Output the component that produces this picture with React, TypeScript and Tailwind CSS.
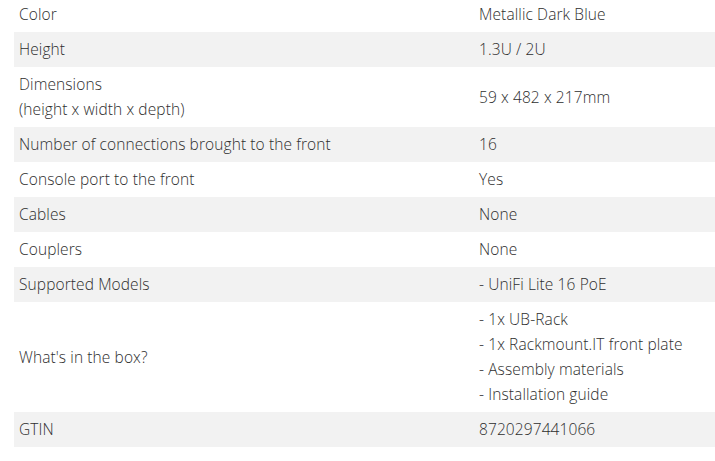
import React from "react";

const rows: { label: React.ReactNode; value: React.ReactNode }[] = [
  { label: "Color", value: "Metallic Dark Blue" },
  { label: "Height", value: "1.3U / 2U" },
  {
    label: (
      <>
        Dimensions
        <br />
        (height x width x depth)
      </>
    ),
    value: "59 x 482 x 217mm",
  },
  { label: "Number of connections brought to the front", value: "16" },
  { label: "Console port to the front", value: "Yes" },
  { label: "Cables", value: "None" },
  { label: "Couplers", value: "None" },
  { label: "Supported Models", value: "- UniFi Lite 16 PoE" },
  {
    label: "What's in the box?",
    value: (
      <>
        - 1x UB-Rack
        <br />- 1x Rackmount.IT front plate
        <br />- Assembly materials
        <br />- Installation guide
      </>
    ),
  },
  { label: "GTIN", value: "8720297441066" },
];

export default function App() {
  return (
    <div className="w-[715px] h-[461px] overflow-hidden bg-white">
      <div className="ml-[14px] mt-[-3px] w-[920px] font-['Open_Sans',sans-serif] font-light text-[15.5px] tracking-[0.1px] leading-[25px] text-[#2e2e2e]">
        {rows.map((r, i) => (
          <div
            key={i}
            className={`flex items-center ${i % 2 === 1 ? "bg-[#f2f2f2]" : "bg-white"}`}
          >
            <div className="w-[460px] shrink-0 px-[5px] py-[5px]">{r.label}</div>
            <div className="flex-1 px-[5px] py-[5px]">{r.value}</div>
          </div>
        ))}
      </div>
    </div>
  );
}
